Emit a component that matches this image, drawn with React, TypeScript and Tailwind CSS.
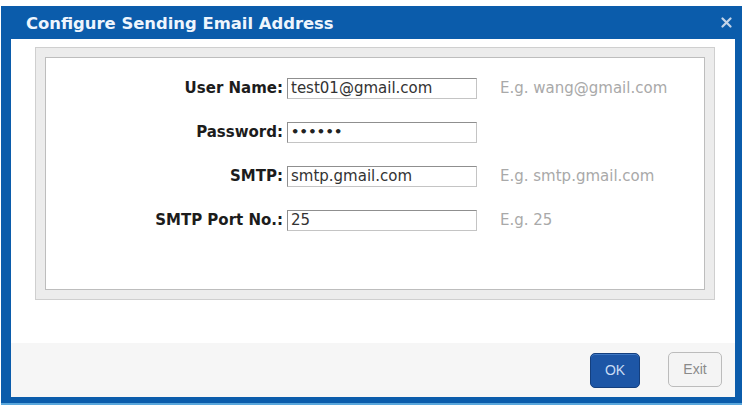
const FIELDS = [
  { label: 'User Name:', value: 'test01@gmail.com', hint: 'E.g. wang@gmail.com' },
  { label: 'Password:', value: '••••••', hint: '', secret: true },
  { label: 'SMTP:', value: 'smtp.gmail.com', hint: 'E.g. smtp.gmail.com' },
  { label: 'SMTP Port No.:', value: '25', hint: 'E.g. 25' },
]

function FieldRow({ label, value, hint, secret }: { label: string; value: string; hint: string; secret?: boolean }) {
  return (
    <div className="flex items-center h-[22px]">
      <span className="w-[241px] text-right font-bold text-[15px] text-[#1c1c1c] pr-[4px]">{label}</span>
      <div className="w-[190px] h-[21px] flex items-center px-[3px] border border-[#8f8f8f] border-r-[#c4c4c4] border-b-[#c4c4c4] bg-white">
        <span className={secret ? 'text-[13px] font-bold tracking-[0.3px] text-[#222]' : 'text-[15px] text-[#333]'}>{value}</span>
      </div>
      {hint && <span className="ml-[23px] text-[15px] text-[#a9a9a9]">{hint}</span>}
    </div>
  )
}

export default function App() {
  return (
    <div className="w-[745px] h-[407px] bg-white pt-[6px] pl-[1px] font-['DejaVu_Sans',sans-serif]">
      <div className="w-[741px] h-[399px] bg-[#0b5cab] flex flex-col pl-[10px] pr-[7px] pb-[6px] border-b-2 border-[#5aa7dc]">
        {/* title bar */}
        <div className="h-[33px] flex items-center justify-between pl-[15px] pr-[3px] pt-[4px]">
          <span className="text-[#eef5fd] font-bold text-[16.4px]">Configure Sending Email Address</span>
          <svg width="11" height="11" viewBox="0 0 11 11" className="mb-[4px]">
            <path d="M1.5 1.5 L9.5 9.5 M9.5 1.5 L1.5 9.5" stroke="#c3d4e8" strokeWidth="2.2" strokeLinecap="round" />
          </svg>
        </div>

        <div className="flex-1 bg-white flex flex-col">
          <div className="pt-[8px] pl-[24px] pr-[20px] flex-1">
            <div className="h-[253px] border border-[#cfcfcf] bg-[#ececec] p-[9px]">
              <div className="h-full border border-[#bdbdbd] bg-white pt-[19px] flex flex-col gap-[22px]">
                {FIELDS.map(f => (
                  <FieldRow key={f.label} {...f} />
                ))}
              </div>
            </div>
          </div>

          {/* footer buttons */}
          <div className="h-[54px] bg-[#f6f6f6] flex items-start justify-end gap-[28px] pr-[13px] pt-[10px] font-['Liberation_Sans',sans-serif]">
            <button className="w-[50px] h-[35px] rounded-[5px] bg-[#1d56a6] border border-[#143f7e] text-[#c9dcf4] text-[14px] shadow-[inset_0_1px_0_#3f78c4]">
              OK
            </button>
            <button className="w-[54px] h-[35px] -mt-[1px] rounded-[5px] bg-[#f4f4f4] border border-[#bcbcbc] text-[#8a8a8a] text-[14px]">
              Exit
            </button>
          </div>
        </div>
      </div>
    </div>
  )
}
